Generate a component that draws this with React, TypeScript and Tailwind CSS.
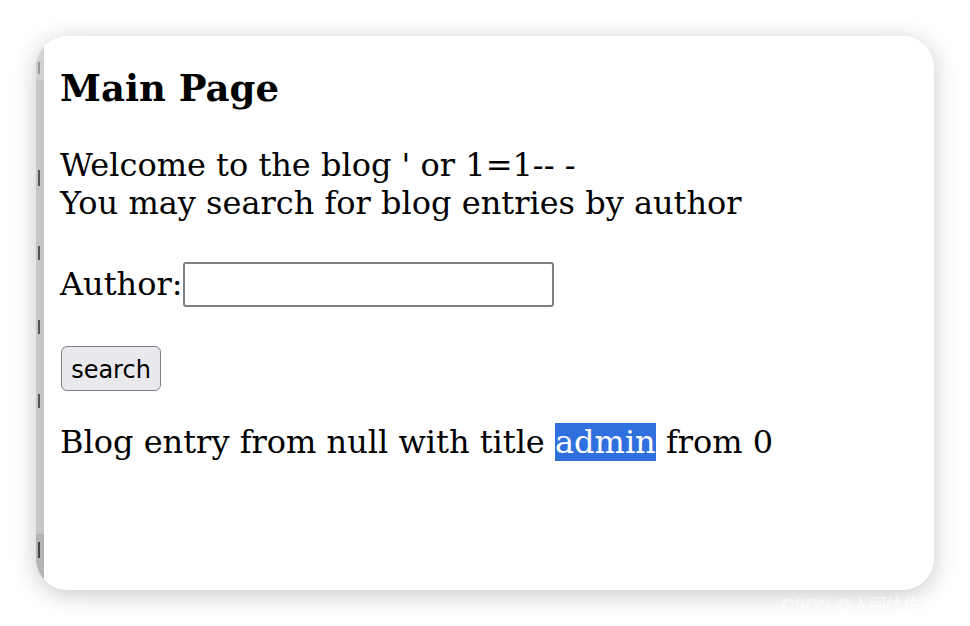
export default function App() {
  return (
    <div className="w-[970px] h-[626px] bg-white relative overflow-hidden" style={{ fontFamily: '"DejaVu Serif", serif' }}>
      <div className="absolute left-[36px] top-[36px] w-[898px] h-[554px] rounded-[32px] overflow-hidden flex bg-white shadow-[0_4px_24px_rgba(0,0,0,0.22)]">
        {/* strip of the window behind */}
        <div className="w-[8px] bg-[#c6c6c6] flex flex-col">
          <div className="h-[24px] bg-[#d4d4d4]" />
          <div className="h-[20px] bg-[#d0d0d0] relative">
            <div className="absolute left-[2px] top-[2px] w-[2px] h-[12px] bg-[#9a9a9a]" />
          </div>
          <div className="flex-1 flex flex-col gap-[60px] pt-[90px] pl-[2px]">
            <div className="w-[2px] h-[16px] bg-[#555]" />
            <div className="w-[2px] h-[14px] bg-[#555]" />
            <div className="w-[2px] h-[14px] bg-[#555]" />
            <div className="w-[2px] h-[14px] bg-[#555]" />
          </div>
          <div className="h-[56px] bg-[#b4b4b4] pl-[2px] pt-[8px]">
            <div className="w-[2px] h-[16px] bg-[#444]" />
          </div>
        </div>
        <div className="flex-1 bg-white pl-[16px] pt-[30px] text-black text-[32px]">
          <h3 className="font-bold text-[37px] leading-[44px]">Main Page</h3>
          <p className="mt-[36px] leading-[38px]">
            Welcome to the blog ' or 1=1-- -
            <br />
            You may search for blog entries by author
          </p>
          <div className="mt-[40px] flex items-center h-[44px]">
            <span>Author:</span>
            <input className="w-[371px] h-[45px] border-2 border-[#7f7f86] rounded-[3px] bg-white" />
          </div>
          <div className="mt-[37px] pl-[1px]">
            <button className="w-[100px] h-[45px] pt-[3px] bg-[#e9e9ed] border-[1.5px] border-[#7f7f86] rounded-[6px] text-[24px] text-black" style={{ fontFamily: '"DejaVu Sans", sans-serif' }}>
              search
            </button>
          </div>
          <p className="mt-[32px] leading-[38px]">
            Blog entry from null with title <span className="bg-[#2f6fde] text-white">admin</span> from 0
          </p>
        </div>
      </div>
      <div className="absolute left-[782px] top-[593px] text-[17px] text-white/70" style={{ fontFamily: '"Liberation Sans", "Noto Sans CJK SC", sans-serif' }}>
        CSDN @人间体佐菲
      </div>
    </div>
  );
}
